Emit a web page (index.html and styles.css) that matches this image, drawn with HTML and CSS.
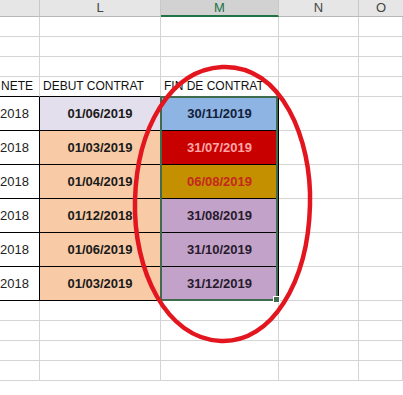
FILE: index.html
```html
<!DOCTYPE html>
<html lang="fr">
<head>
<meta charset="utf-8">
<title>Contrats</title>
<link rel="stylesheet" href="styles.css">
</head>
<body>
<div class="sheet">
  <div class="grid">
    <div class="ch">&nbsp;</div>
    <div class="ch">L</div>
    <div class="ch sel">M</div>
    <div class="ch">N</div>
    <div class="ch last">O</div>

    <div class="c"></div><div class="c"></div><div class="c"></div><div class="c"></div><div class="c"></div>
    <div class="c"></div><div class="c"></div><div class="c"></div><div class="c"></div><div class="c"></div>
    <div class="c"></div><div class="c"></div><div class="c"></div><div class="c"></div><div class="c"></div>

    <div class="c hd k bb">NETE</div>
    <div class="c hd bb">DEBUT CONTRAT</div>
    <div class="c hd">FIN DE CONTRAT</div>
    <div class="c"></div><div class="c"></div>

    <div class="c d k">2018</div>
    <div class="c d lav">01/06/2019</div>
    <div class="c d blue">30/11/2019</div>
    <div class="c dr"></div><div class="c dr"></div>

    <div class="c d k">2018</div>
    <div class="c d peach">01/03/2019</div>
    <div class="c d red">31/07/2019</div>
    <div class="c dr"></div><div class="c dr"></div>

    <div class="c d k">2018</div>
    <div class="c d peach">01/04/2019</div>
    <div class="c d gold">06/08/2019</div>
    <div class="c dr"></div><div class="c dr"></div>

    <div class="c d k">2018</div>
    <div class="c d peach">01/12/2018</div>
    <div class="c d purple">31/08/2019</div>
    <div class="c dr"></div><div class="c dr"></div>

    <div class="c d k">2018</div>
    <div class="c d peach">01/06/2019</div>
    <div class="c d purple">31/10/2019</div>
    <div class="c dr"></div><div class="c dr"></div>

    <div class="c d k">2018</div>
    <div class="c d peach">01/03/2019</div>
    <div class="c d purple">31/12/2019</div>
    <div class="c dr"></div><div class="c dr"></div>

    <div class="c"></div><div class="c"></div><div class="c"></div><div class="c"></div><div class="c"></div>
    <div class="c"></div><div class="c"></div><div class="c"></div><div class="c"></div><div class="c"></div>
    <div class="c"></div><div class="c"></div><div class="c"></div><div class="c"></div><div class="c"></div>
    <div class="c"></div><div class="c"></div><div class="c"></div><div class="c"></div><div class="c"></div>
  </div>
  <div class="selection"><span class="handle"></span></div>
  <svg class="circle" width="403" height="395" viewBox="0 0 403 395">
    <path d="M222 67 C 282 64, 312 140, 310 205 C 308 282, 272 343, 221 341 C 166 339, 133 270, 135 200 C 137 128, 170 70, 222 67 Z" fill="none" stroke="#e3161f" stroke-width="4.5"/>
  </svg>
</div>
</body>
</html>
```
FILE: styles.css
```css
html, body {
  margin: 0;
  padding: 0;
  background: #ffffff;
  overflow: hidden;
}
.sheet {
  position: relative;
  width: 403px;
  height: 395px;
  overflow: hidden;
  font-family: "Liberation Sans", Arial, sans-serif;
}
.grid {
  display: grid;
  grid-template-columns: 40px 121px 118px 80px 44px;
  grid-template-rows: 17px 20px 20px 20px 20px 34px 34px 34px 34px 34px 34px 20px 20px 20px 20px;
}
.ch {
  box-sizing: border-box;
  background: #e6e6e6;
  border-right: 1px solid #c8c8c8;
  border-bottom: 1px solid #b8b8b8;
  color: #444444;
  font-size: 13px;
  line-height: 16px;
  text-align: center;
}
.ch.sel {
  background: #d2d2d2;
  color: #217346;
  border-bottom: 2px solid #217346;
}
.ch.last { border-right: none; }
.c {
  box-sizing: border-box;
  border-right: 1px solid #d4d4d4;
  border-bottom: 1px solid #d4d4d4;
  overflow: hidden;
  white-space: nowrap;
}
.hd {
  font-size: 12px;
  line-height: 19px;
  color: #111111;
  padding-left: 3px;
  overflow: visible;
}
.hd.k {
  padding-left: 1px;
}
.bb { border-bottom: 1px solid #000000; }
.d {
  border-bottom: 1px solid #000000;
  border-right: 1px solid #000000;
  font-size: 13px;
  font-weight: bold;
  line-height: 33px;
  text-align: center;
  color: #1a1a1a;
}
.d.k {
  font-weight: normal;
  font-size: 13px;
  text-align: left;
  padding-left: 0;
  color: #222222;
}
.dr { border-bottom: 1px solid #d4d4d4; }
.lav { background: #e4dfec; }
.peach { background: #f8cba6; }
.blue { background: #8db4e2; color: #13203a; }
.red { background: #c80000; color: #ffa6a6; }
.gold { background: #c49000; color: #c4281e; }
.purple { background: #c3a2c9; color: #261a2c; }
.selection {
  position: absolute;
  left: 160px;
  top: 96px;
  width: 118px;
  height: 205px;
  box-sizing: border-box;
  border: 2px solid #3f6b4f;
}
.handle {
  position: absolute;
  right: -4px;
  bottom: -4px;
  width: 5px;
  height: 5px;
  background: #3f6b4f;
  border: 1px solid #ffffff;
}
.circle {
  position: absolute;
  left: 0;
  top: 0;
  pointer-events: none;
}
```
